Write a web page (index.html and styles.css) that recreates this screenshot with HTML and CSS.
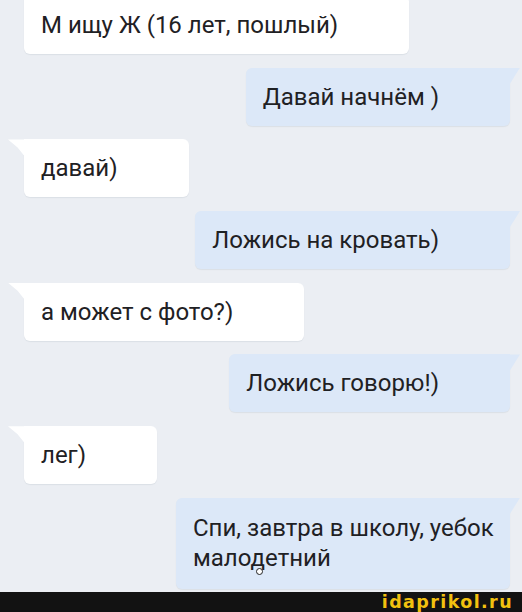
FILE: index.html
```html
<!DOCTYPE html>
<html lang="ru">
<head>
<meta charset="utf-8">
<link rel="stylesheet" href="styles.css">
</head>
<body>
<div class="page">
  <div class="chat">
    <div class="msg in first">М ищу Ж (16 лет, пошлый)</div>
    <div class="msg out">Давай начнём )</div>
    <div class="msg in">давай)</div>
    <div class="msg out">Ложись на кровать)</div>
    <div class="msg in">а может с фото?)</div>
    <div class="msg out">Ложись говорю!)</div>
    <div class="msg in">лег)</div>
    <div class="msg out wrap">Спи, завтра в школу, уебок малодетний<span class="cursor"></span></div>
  </div>
  <div class="bar"><span class="mark">idaprikol.ru</span></div>
</div>
</body>
</html>
```

FILE: styles.css
```css
html, body {
  margin: 0;
  padding: 0;
}
body {
  background: #ebeef3;
  font-family: Roboto, "Liberation Sans", sans-serif;
}
.page {
  height: 612px;
  display: flex;
  flex-direction: column;
  overflow: hidden;
}
.chat {
  flex: 1;
  display: flex;
  flex-direction: column;
  gap: 13.7px;
  padding: 0 12px 0 24px;
  margin-top: -4px;
  overflow: hidden;
}
.msg {
  position: relative;
  box-sizing: border-box;
  font-size: 24px;
  line-height: 30px;
  color: #1f2124;
  padding: 14px 71px 14px 17px;
  border-radius: 6px;
  box-shadow: 0 1px 1px rgba(40, 60, 90, 0.08);
  white-space: nowrap;
}
.in {
  align-self: flex-start;
  background: #ffffff;
  border-top-left-radius: 0;
}
.out {
  align-self: flex-end;
  background: #dce8f8;
  border-top-right-radius: 0;
}
.in::before {
  content: "";
  position: absolute;
  left: -16px;
  top: 0;
  width: 16px;
  height: 16px;
  background: #ffffff;
  clip-path: polygon(0 0, 100% 0, 100% 100%, 60% 50%);
}
.out::before {
  content: "";
  position: absolute;
  right: -10px;
  top: 0;
  width: 10px;
  height: 16px;
  background: #dce8f8;
  clip-path: polygon(0 0, 100% 0, 60% 40%, 0 100%);
}
.first::before {
  display: none;
}
.wrap {
  white-space: normal;
  width: 334px;
  padding: 15px 10px 16px 17px;
}
.cursor {
  position: absolute;
  left: 80px;
  top: 70px;
  width: 5px;
  height: 5px;
  border: 1.5px solid #222;
  border-radius: 50%;
  background: #fff;
}
.bar {
  height: 20px;
  background: #121212;
  display: flex;
  justify-content: flex-end;
  align-items: center;
  padding-right: 9px;
}
.mark {
  font-family: "DejaVu Sans", "Open Sans", sans-serif;
  font-weight: 700;
  font-size: 17.5px;
  line-height: 20px;
  color: #f2c10f;
  letter-spacing: 1.4px;
}
```
